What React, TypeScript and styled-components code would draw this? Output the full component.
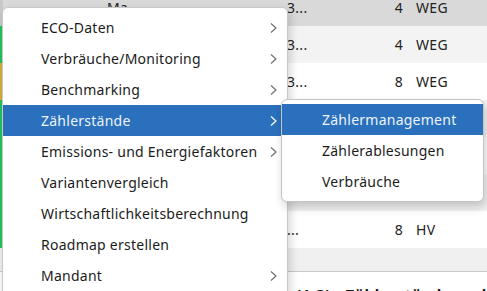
import React from "react"
import styled, { createGlobalStyle } from "styled-components"

const GlobalStyle = createGlobalStyle`
  html, body {
    margin: 0;
    padding: 0;
    background: #ffffff;
    overflow: hidden;
  }
  body {
    font-family: "Noto Sans", "Open Sans", sans-serif;
    color: #1b1b1b;
  }
`

const Screen = styled.div`
  position: relative;
  width: 487px;
  height: 291px;
  overflow: hidden;
  background: #ffffff;
`

// the list is scrolled a few pixels, so the first row is cut at the top
const Table = styled.div`
  display: flex;
  flex-direction: column;
  margin-top: -11px;
`

const Row = styled.div<{ $bg: string; $stripe: string }>`
  display: grid;
  grid-template-columns: 3px 100px 180px 40px 80px 9px 1fr;
  align-items: center;
  height: 37px;
  background: ${(p) => p.$bg};
  font-size: 14px;
  color: #222;
  & > :first-child {
    align-self: stretch;
    background: ${(p) => p.$stripe};
  }
`

const Cell = styled.span<{ $right?: boolean }>`
  white-space: nowrap;
  overflow: hidden;
  padding-left: ${(p) => (p.$right ? 0 : 4)}px;
  text-align: ${(p) => (p.$right ? "right" : "left")};
  letter-spacing: 0.3px;
`

const Band = styled.div`
  height: 23px;
  background: #f0f0f0;
  border-bottom: 1px solid #c8c8c8;
`

const Heading = styled.div`
  padding: 12px 0 0 296px;
  font-size: 15px;
  font-weight: 700;
  white-space: nowrap;
  letter-spacing: 0.6px;
`

const Menu = styled.div`
  position: absolute;
  left: 2px;
  top: 7px;
  width: 284px;
  padding: 4px 0;
  background: #ffffff;
  border: 1px solid #c9c9c9;
  border-radius: 6px 6px 0 0;
  box-shadow: 2px 4px 10px rgba(0, 0, 0, 0.18);
`

const SubMenu = styled.div`
  position: absolute;
  left: 281px;
  top: 99px;
  width: 201px;
  padding: 4px 0;
  background: #ffffff;
  border: 1px solid #c4c4c4;
  border-radius: 6px;
  box-shadow: 2px 5px 10px rgba(0, 0, 0, 0.2);
`

const Item = styled.div<{ $active?: boolean; $indent: number }>`
  display: flex;
  align-items: center;
  height: 31px;
  padding-left: ${(p) => p.$indent}px;
  padding-right: 9px;
  font-size: 14px;
  letter-spacing: 0.25px;
  white-space: nowrap;
  background: ${(p) => (p.$active ? "#2a70bd" : "transparent")};
  color: ${(p) => (p.$active ? "#eef4fb" : "#1b1b1b")};
`

const Label = styled.span`
  flex: 1;
`

const Chevron = styled.svg<{ $active?: boolean }>`
  width: 9px;
  height: 14px;
  stroke: ${(p) => (p.$active ? "#ffffff" : "#707070")};
  fill: none;
  stroke-width: 1.2;
`

const rows = [
  { bg: "#d9d9d9", stripe: "#c9c9c9", a: "...", b: "Ma...", c: "3...", n: "4", t: "WEG" },
  { bg: "#f3f3f3", stripe: "#22c55e", a: "", b: "", c: "3...", n: "4", t: "WEG" },
  { bg: "#ffffff", stripe: "#d4b13a", a: "", b: "", c: "3...", n: "8", t: "WEG" },
  { bg: "#f3f3f3", stripe: "#22c55e", a: "", b: "", c: "3...", n: "4", t: "WEG" },
  { bg: "#ffffff", stripe: "#22c55e", a: "", b: "", c: "3...", n: "6", t: "WEG" },
  { bg: "#f3f3f3", stripe: "#22c55e", a: "", b: "", c: "3...", n: "8", t: "WEG" },
  { bg: "#ffffff", stripe: "#22c55e", a: "", b: "", c: "...", n: "8", t: "HV" },
]

const mainItems = [
  { label: "ECO-Daten", sub: true },
  { label: "Verbräuche/Monitoring", sub: true },
  { label: "Benchmarking", sub: true },
  { label: "Zählerstände", sub: true, active: true },
  { label: "Emissions- und Energiefaktoren", sub: true },
  { label: "Variantenvergleich" },
  { label: "Wirtschaftlichkeitsberechnung" },
  { label: "Roadmap erstellen" },
  { label: "Mandant", sub: true },
]

const subItems = [
  { label: "Zählermanagement", active: true },
  { label: "Zählerablesungen" },
  { label: "Verbräuche" },
]

function Arrow({ active }: { active?: boolean }) {
  return (
    <Chevron $active={active} viewBox="0 0 9 14">
      <path d="M2 2.5 L7 7 L2 11.5" />
    </Chevron>
  )
}

export default function App() {
  return (
    <Screen>
      <GlobalStyle />
      <Table>
        {rows.map((r, i) => (
          <Row key={i} $bg={r.bg} $stripe={r.stripe}>
            <span />
            <Cell>{r.a}</Cell>
            <Cell>{r.b}</Cell>
            <Cell>{r.c}</Cell>
            <Cell $right>{r.n}</Cell>
            <span />
            <Cell>{r.t}</Cell>
          </Row>
        ))}
        <Band />
        <Heading>(1-3) - Zählerstände und</Heading>
      </Table>

      <Menu>
        {mainItems.map((m) => (
          <Item key={m.label} $active={m.active} $indent={38}>
            <Label>{m.label}</Label>
            {m.sub && <Arrow active={m.active} />}
          </Item>
        ))}
      </Menu>

      <SubMenu>
        {subItems.map((s) => (
          <Item key={s.label} $active={s.active} $indent={40}>
            <Label>{s.label}</Label>
          </Item>
        ))}
      </SubMenu>
    </Screen>
  )
}
